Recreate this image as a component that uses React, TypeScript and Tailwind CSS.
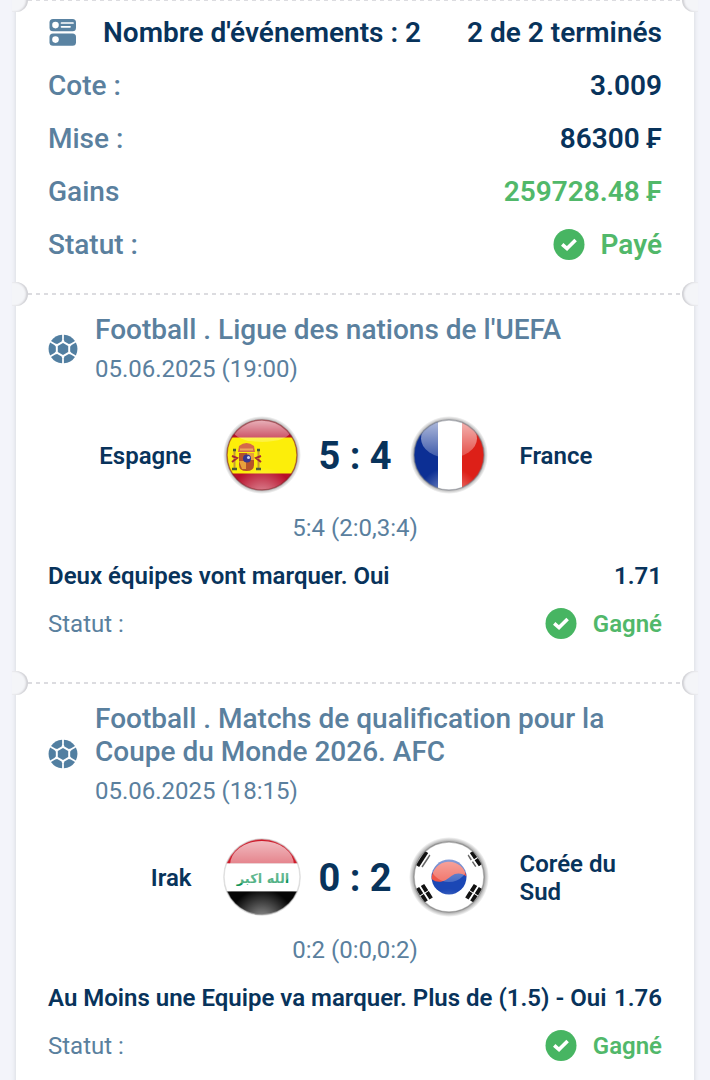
import { useId, type ReactNode } from "react";

type FlagName = "spain" | "france" | "iraq" | "korea";

interface Team {
  name: string;
  flag: FlagName;
}

interface BetEvent {
  league: string;
  date: string;
  home: Team;
  away: Team;
  score: string;
  periods: string;
  market: string;
  odds: string;
  status: string;
}

const events: BetEvent[] = [
  {
    league: "Football . Ligue des nations de l'UEFA",
    date: "05.06.2025 (19:00)",
    home: { name: "Espagne", flag: "spain" },
    away: { name: "France", flag: "france" },
    score: "5 : 4",
    periods: "5:4 (2:0,3:4)",
    market: "Deux équipes vont marquer. Oui",
    odds: "1.71",
    status: "Gagné",
  },
  {
    league: "Football . Matchs de qualification pour la Coupe du Monde 2026. AFC",
    date: "05.06.2025 (18:15)",
    home: { name: "Irak", flag: "iraq" },
    away: { name: "Corée du Sud", flag: "korea" },
    score: "0 : 2",
    periods: "0:2 (0:0,0:2)",
    market: "Au Moins une Equipe va marquer. Plus de (1.5) - Oui",
    odds: "1.76",
    status: "Gagné",
  },
];

function EventsIcon() {
  return (
    <svg viewBox="0 1 28 28" className="size-7 shrink-0" aria-hidden="true">
      <rect x="1.5" y="1" width="26.5" height="12.3" rx="3.5" fill="#5a83a2" />
      <rect x="1.5" y="15.5" width="26.5" height="12.3" rx="3.5" fill="#5a83a2" />
      <circle cx="7.5" cy="7.1" r="3.3" fill="#fff" />
      <circle cx="7.5" cy="21.6" r="3.3" fill="#fff" />
      <path d="M13.5 5H25M13.5 8.8H22" stroke="#fff" strokeWidth="1.7" strokeLinecap="round" />
    </svg>
  );
}

function BallIcon() {
  const panels = [0, 60, 120, 180, 240, 300];
  return (
    <svg viewBox="-15 -15 30 30" className="size-[30px] shrink-0" fill="#527fa1" aria-hidden="true">
      <path d="M0-6 5.2-3V3L0 6-5.2 3V-3Z" />
      {panels.map((angle) => (
        <path key={angle} transform={`rotate(${angle})`} d="M8.6-4 12.9-6.4A14.6 14.6 0 0 1 12.9 6.400L8.6 4 7.2 2.600V-2.600Z" />
      ))}
    </svg>
  );
}

function CheckIcon() {
  return (
    <svg viewBox="0 0 32 32" className="size-8 shrink-0" aria-hidden="true">
      <circle cx="16" cy="15.5" r="15.5" fill="#47b562" />
      <path d="M9.2 15.4 14 19.6 22.6 11" fill="none" stroke="#fff" strokeWidth="3.6" />
    </svg>
  );
}

function Spain() {
  return (
    <>
      <path fill="#b80f2a" d="M0 0h80v80H0z" />
      <path fill="#fcee0a" d="M0 22.5h80v36H0z" />
      <path fill="#b5532b" d="M17 38h15v12q0 6-7.5 6t-7.5-6z" />
      <path fill="#e8a13c" d="M25 38h7v7h-7zM17 46h7v8h-4z" />
      <path fill="#d4694a" d="M17 31q7.5-6 15 0l1 6H16z" />
      <path fill="#eba95c" d="M18 33.5h13v2H18z" />
      <circle cx="25" cy="43.5" r="4" fill="#35378f" />
      <circle cx="26.5" cy="42.5" r="1.5" fill="#cfd3ee" />
      <path stroke="#c79a35" strokeWidth="2" d="M12.5 36v18M36.5 36v18" />
      <path stroke="#a32a34" strokeWidth="2" d="m10 41 5 2-5 4M39 41l-5 2 5 4" fill="none" />
      <path stroke="#4a5a35" strokeWidth="2.5" d="M10 54h5M34 54h5M11 35h3M35 35h3" />
    </>
  );
}

function France() {
  return (
    <>
      <path fill="#0c2f94" d="M0 0h29v80H0z" />
      <path fill="#fff" d="M29 0h24v80H29z" />
      <path fill="#dd2018" d="M53 0h27v80H53z" />
    </>
  );
}

function Iraq() {
  return (
    <>
      <path fill="#cf1a2a" d="M0 0h80v26.5H0z" />
      <path fill="#fff" d="M0 26.5h80v28H0z" />
      <path fill="#050505" d="M0 54.5h80V80H0z" />
      <text x="41" y="46" textAnchor="middle" fontSize="13" fill="#12965a" className="font-['DejaVu_Sans',sans-serif] font-bold">
        الله اكبر
      </text>
    </>
  );
}

function Korea() {
  return (
    <>
      <path fill="#fff" d="M0 0h80v80H0z" />
      <circle cx="40" cy="40" r="17.5" fill="#1b47b5" />
      <path fill="#ee5548" d="M22.6 42a17.5 17.5 0 0 1 34.8-2.500c-4-3.500-10-4.500-15-.5s-12 9-19.800 3z" />
      <g stroke="#111" strokeWidth="4">
        <path d="m8.5 29 9-14" />
        <path strokeWidth="1.500" stroke="#666" d="m13 30 8-12" />
        <path d="m62.500 15 9.500 14" strokeDasharray="7.500 1" />
        <path strokeWidth="1.500" stroke="#666" d="m59 18 8 12" strokeDasharray="6 2" />
        <path d="m8.500 51 9 14M13.500 48l9 14" strokeDasharray="7.500 1" />
        <path d="m71.500 51-9 14M66.500 48l-9 14" strokeDasharray="7.500 1" />
      </g>
    </>
  );
}

interface FlagStyle {
  art: ReactNode;
  radius: number;
  rim: string;
  haloSize: number;
  glossWidth: number;
  glossBottom: number;
}

const flags: Record<FlagName, FlagStyle> = {
  spain: { art: <Spain />, radius: 35, rim: "#7d1c22", haloSize: 4, glossWidth: 29, glossBottom: 27 },
  france: { art: <France />, radius: 35, rim: "#777b86", haloSize: 4, glossWidth: 28, glossBottom: 43 },
  iraq: { art: <Iraq />, radius: 38, rim: "#c9c9c9", haloSize: 1, glossWidth: 32, glossBottom: 52 },
  korea: { art: <Korea />, radius: 35, rim: "#777777", haloSize: 5, glossWidth: 20, glossBottom: 45 },
};

function FlagBadge({ team }: { team: Team }) {
  const id = useId();
  const { art, radius, rim, haloSize, glossWidth, glossBottom } = flags[team.flag];
  const glossHeight = (glossBottom - 4) / 2;

  return (
    <svg viewBox="0 1 80 80" className="size-20 overflow-visible" role="img" aria-label={team.name}>
      <defs>
        <clipPath id={`${id}-clip`}>
          <circle cx="40" cy="40" r={radius} />
        </clipPath>
        <linearGradient id={`${id}-gloss`} x1="0" y1="0" x2="0" y2="1">
          <stop offset="0" stopColor="#fff" stopOpacity="0.7" />
          <stop offset="1" stopColor="#fff" stopOpacity="0.2" />
        </linearGradient>
        <radialGradient id={`${id}-glow`} cx="0.5" cy="1.05" r="0.4">
          <stop offset="0" stopColor="#fff" stopOpacity="0.6" />
          <stop offset="1" stopColor="#fff" stopOpacity="0" />
        </radialGradient>
        <radialGradient id={`${id}-halo`}>
          <stop offset="0.86" stopColor="#555" stopOpacity="0.6" />
          <stop offset="1" stopColor="#555" stopOpacity="0" />
        </radialGradient>
      </defs>
      <circle cx="40" cy="40" r={radius + haloSize} fill={`url(#${id}-halo)`} />
      <g clipPath={`url(#${id}-clip)`}>
        {art}
        <path fill={`url(#${id}-glow)`} d="M0 0h80v80H0z" />
        <ellipse cx="40" cy={4 + glossHeight} rx={glossWidth} ry={glossHeight} fill={`url(#${id}-gloss)`} />
      </g>
      <circle cx="40" cy="40" r={radius} fill="none" stroke={rim} strokeOpacity="0.5" strokeWidth="1.5" />
    </svg>
  );
}

function Perforation() {
  return (
    <div className="relative h-0">
      <div className="mx-3 h-[2px] -translate-y-px bg-[repeating-linear-gradient(90deg,#dcdce0_0_4px,transparent_4px_8px)]" />
      <span className="absolute -top-3 -left-1 h-6 w-4 rounded-r-full bg-[#f4f5f8] shadow-[inset_-2px_0_2px_#d0d0d4]" />
      <span className="absolute -top-3 -right-1 h-6 w-4 rounded-l-full bg-[#f4f5f8] shadow-[inset_2px_0_2px_#d0d0d4]" />
    </div>
  );
}

function SummaryRow({ label, children }: { label: string; children: ReactNode }) {
  return (
    <div className="flex h-[53px] items-center justify-between">
      <dt className="font-medium text-[#5a809e]">{label}</dt>
      <dd className="flex items-center gap-4 font-semibold">{children}</dd>
    </div>
  );
}

function Summary() {
  return (
    <section className="px-8 pt-[6px] pb-[23px] text-[28px]">
      <h1 className="flex h-[53px] items-center font-semibold">
        <EventsIcon />
        <span className="ml-[27px]">Nombre d'événements : 2</span>
        <span className="ml-auto">2 de 2 terminés</span>
      </h1>
      <dl>
        <SummaryRow label="Cote :">3.009</SummaryRow>
        <SummaryRow label="Mise :">86300 ₣</SummaryRow>
        <SummaryRow label="Gains">
          <span className="text-[#51b86a]">259728.48 ₣</span>
        </SummaryRow>
        <SummaryRow label="Statut :">
          <CheckIcon />
          <span className="text-[#51b86a]">Payé</span>
        </SummaryRow>
      </dl>
    </section>
  );
}

function EventCard({ event }: { event: BetEvent }) {
  return (
    <section className="px-8 pt-[19px] pb-[35px] text-[24px]">
      <header className="flex items-center gap-[17px] text-[#5a809e]">
        <BallIcon />
        <div>
          <h2 className="text-[28px] leading-[33px] font-medium">{event.league}</h2>
          <p className="mt-2 leading-[30px]">{event.date}</p>
        </div>
      </header>
      <div className="mt-8 grid grid-cols-[1fr_80px_107px_80px_1fr] items-center leading-7 font-semibold">
        <span className="pr-[30px] text-right">{event.home.name}</span>
        <FlagBadge team={event.home} />
        <strong className="text-center text-[38px] font-bold">{event.score}</strong>
        <FlagBadge team={event.away} />
        <span className="pr-6 pl-[31px]">{event.away.name}</span>
      </div>
      <p className="mt-2 text-center leading-[48px] text-[#5a809e]">{event.periods}</p>
      <div className="flex justify-between leading-[48px] font-semibold">
        <span>{event.market}</span>
        <span>{event.odds}</span>
      </div>
      <div className="flex h-12 items-center justify-between">
        <span className="text-[#5a809e]">Statut :</span>
        <span className="flex items-center gap-4 font-semibold text-[#51b86a]">
          <CheckIcon />
          {event.status}
        </span>
      </div>
    </section>
  );
}

export default function App() {
  return (
    <div className="min-h-screen bg-[#f3f4fa] px-4 font-[Roboto,sans-serif] text-[#08335b]">
      <main className="min-h-screen bg-white shadow-[0_0_5px_#d3d4da]">
        <Perforation />
        <Summary />
        {events.map((event) => (
          <div key={event.league}>
            <Perforation />
            <EventCard event={event} />
          </div>
        ))}
      </main>
    </div>
  );
}
